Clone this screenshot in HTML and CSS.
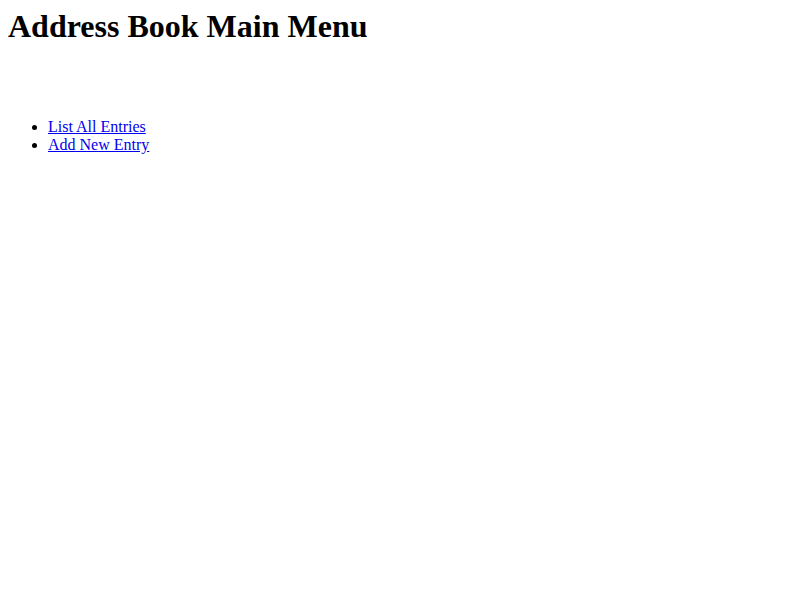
FILE: index.html
```html
<!DOCTYPE html>
<html>
<head>
<meta charset="utf-8">
<title>Address Book Main Menu</title>
<link rel="stylesheet" href="styles.css">
</head>
<body class="page">
<h1 class="title">Address Book Main Menu</h1>
<ul class="menu">
<li><a href="#">List All Entries</a></li>
<li><a href="#">Add New Entry</a></li>
</ul>
</body>
</html>
```
FILE: styles.css
```css
.page {
  margin: 8px;
  font-family: "Liberation Serif", "Times New Roman", serif;
  font-size: 16px;
  color: #000;
  background: #fff;
}
.title {
  font-size: 32px;
  font-weight: bold;
  margin: 0;
}
.menu {
  margin: 73px 0 16px;
  padding-left: 40px;
}
.menu a {
  color: #0000ee;
}
```
